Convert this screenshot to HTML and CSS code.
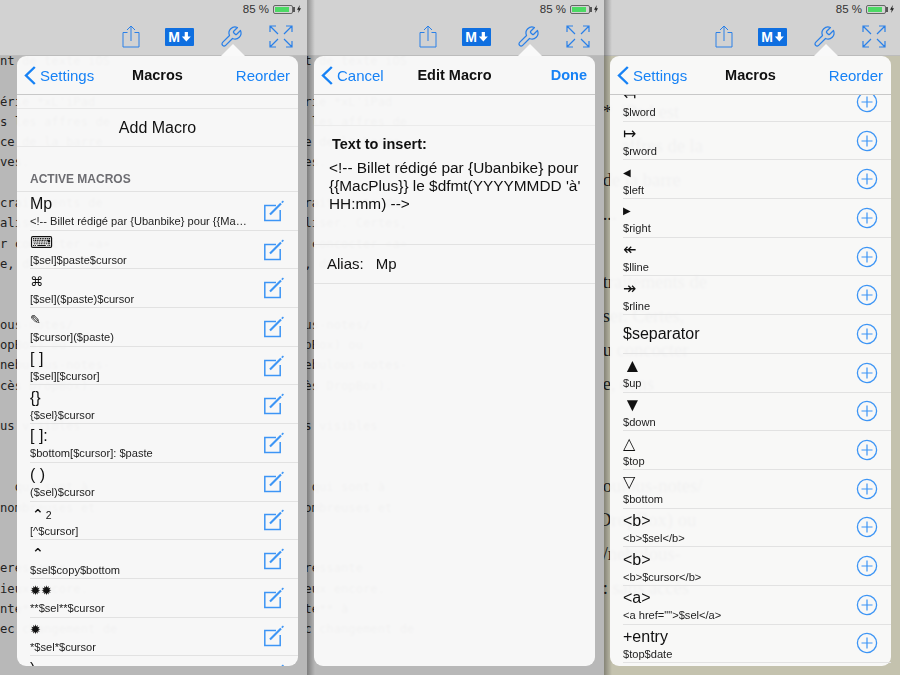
FILE: index.html
```html
<!DOCTYPE html>
<html lang="en">
<head>
    <meta charset="UTF-8">
    <meta name="viewport" content="width=device-width, initial-scale=1.0">
    <title>Macros</title>
    <link rel="stylesheet" href="styles.css">
</head>
<body>
    <svg class="icon-defs" xmlns="http://www.w3.org/2000/svg">
        <symbol id="icon-share" viewBox="0 0 18 23"><path fill="none" stroke="currentColor" d="M5.5 7.5H1v14.5h16V7.5h-4.5M9 16V1M5 5l4-4 4 4"/></symbol>
        <symbol id="icon-wrench" viewBox="0 0 24 24"><path fill="none" stroke="currentColor" stroke-width="1.25" stroke-linejoin="round" d="M14.7 6.3a1 1 0 0 0 0 1.4l1.6 1.6a1 1 0 0 0 1.4 0l3.77-3.77a6 6 0 0 1-7.94 7.94l-6.91 6.91a2.12 2.12 0 0 1-3-3l6.91-6.91a6 6 0 0 1 7.94-7.94l-3.76 3.76z"/></symbol>
        <symbol id="icon-expand" viewBox="0 0 26 25"><path fill="none" stroke="currentColor" stroke-width="1.2" d="M2 2l8 8M2 8V2h6M24 2l-8 8M24 8V2h-6M2 23l8-8M2 17v6h6M24 23l-8-8M24 17v6h-6"/></symbol>
        <symbol id="icon-edit" viewBox="0 0 22 22"><path fill="none" stroke="currentColor" stroke-width="1.5" d="M13 5.5H1.8v15h15.4V10"/><path fill="none" stroke="currentColor" stroke-width="2.2" d="M7 14.5L18 3.5"/><path fill="none" stroke="currentColor" stroke-width="1.6" d="M18.8 2.6l1.6-1.4"/></symbol>
        <symbol id="icon-add" viewBox="0 0 22 22"><circle cx="11" cy="11" r="9.6" fill="none" stroke="currentColor" stroke-width="1.3"/><path fill="none" stroke="currentColor" stroke-width="1.2" d="M11 5.5v11M5.5 11h11"/></symbol>
        <symbol id="icon-chevron" viewBox="0 0 12 19"><path fill="none" stroke="currentColor" stroke-width="2.4" d="M10.8 1L2 9.5l8.8 8.5"/></symbol>
    </svg>

    <div class="screens">
        <!-- list of saved macros -->
        <section class="pane pane-first">
            <header class="toolbar">
                <div class="status"><span>85 %</span><span class="battery"><i></i></span><span class="bolt"></span></div>
                <div class="tools">
                    <svg class="tool tool-share"><use href="#icon-share"/></svg>
                    <span class="md-badge">M<b></b></span>
                    <svg class="tool tool-wrench"><use href="#icon-wrench"/></svg>
                    <svg class="tool tool-expand"><use href="#icon-expand"/></svg>
                </div>
            </header>
            <pre class="backdrop">nt de texte iOS

érie *xL'iPad
s les affres de
ce de la barre
ves.

craitements de
aliser. Certes,
r concocter «a»
e, dans


ous-notes/
opBox) ou
nebulous-notes-
cès DropBox).

us visibles


  qui sont à
nombreuses et


eressante
ieux encore.
nte** à
ec changement de</pre>
            <div class="popover">
                <nav class="navbar">
                    <a class="nav-back"><svg class="chevron"><use href="#icon-chevron"/></svg>Settings</a>
                    <strong class="nav-title">Macros</strong>
                    <a class="nav-action">Reorder</a>
                </nav>
                <div class="content">
                    <div class="add-row">Add Macro</div>
                    <h2 class="section-label">ACTIVE MACROS</h2>
                    <ul class="macro-list">
                        <li class="macro-row"><div><div class="macro-name">Mp</div><div class="macro-text">&lt;!-- Billet rédigé par {Ubanbike} pour {{Ma…</div></div><svg class="row-icon"><use href="#icon-edit"/></svg></li>
                        <li class="macro-row"><div><div class="macro-name">⌨</div><div class="macro-text">[$sel]$paste$cursor</div></div><svg class="row-icon"><use href="#icon-edit"/></svg></li>
                        <li class="macro-row"><div><div class="macro-name glyph-small">⌘</div><div class="macro-text">[$sel]($paste)$cursor</div></div><svg class="row-icon"><use href="#icon-edit"/></svg></li>
                        <li class="macro-row"><div><div class="macro-name glyph-small">✎</div><div class="macro-text">[$cursor]($paste)</div></div><svg class="row-icon"><use href="#icon-edit"/></svg></li>
                        <li class="macro-row"><div><div class="macro-name">[ ]</div><div class="macro-text">[$sel][$cursor]</div></div><svg class="row-icon"><use href="#icon-edit"/></svg></li>
                        <li class="macro-row"><div><div class="macro-name">{}</div><div class="macro-text">{$sel}$cursor</div></div><svg class="row-icon"><use href="#icon-edit"/></svg></li>
                        <li class="macro-row"><div><div class="macro-name">[ ]:</div><div class="macro-text">$bottom[$cursor]: $paste</div></div><svg class="row-icon"><use href="#icon-edit"/></svg></li>
                        <li class="macro-row"><div><div class="macro-name">( )</div><div class="macro-text">($sel)$cursor</div></div><svg class="row-icon"><use href="#icon-edit"/></svg></li>
                        <li class="macro-row"><div><div class="macro-name glyph-caret">⌃<span class="small-two">2</span></div><div class="macro-text">[^$cursor]</div></div><svg class="row-icon"><use href="#icon-edit"/></svg></li>
                        <li class="macro-row"><div><div class="macro-name glyph-caret">⌃</div><div class="macro-text">$sel$copy$bottom</div></div><svg class="row-icon"><use href="#icon-edit"/></svg></li>
                        <li class="macro-row"><div><div class="macro-name glyph-small">✹✹</div><div class="macro-text">**$sel**$cursor</div></div><svg class="row-icon"><use href="#icon-edit"/></svg></li>
                        <li class="macro-row"><div><div class="macro-name glyph-small">✹</div><div class="macro-text">*$sel*$cursor</div></div><svg class="row-icon"><use href="#icon-edit"/></svg></li>
                        <li class="macro-row"><div><div class="macro-name">)</div><div class="macro-text">$sel)</div></div><svg class="row-icon"><use href="#icon-edit"/></svg></li>
                    </ul>
                </div>
            </div>
        </section>

        <!-- one macro being edited -->
        <section class="pane">
            <div class="pane-shadow"></div>
            <header class="toolbar">
                <div class="status"><span>85 %</span><span class="battery"><i></i></span><span class="bolt"></span></div>
                <div class="tools">
                    <svg class="tool tool-share"><use href="#icon-share"/></svg>
                    <span class="md-badge">M<b></b></span>
                    <svg class="tool tool-wrench"><use href="#icon-wrench"/></svg>
                    <svg class="tool tool-expand"><use href="#icon-expand"/></svg>
                </div>
            </header>
            <pre class="backdrop backdrop-shifted">nt de texte iOS

érie *xL'iPad
s les affres de
ce de la barre
ves.

craitements de
aliser. Certes,
r concocter «a»
e, dans


ous-notes/
opBox) ou
nebulous-notes-
cès DropBox).

us visibles


  qui sont à
nombreuses et


eressante
ieux encore.
nte** à
ec changement de</pre>
            <div class="popover">
                <nav class="navbar">
                    <a class="nav-back"><svg class="chevron"><use href="#icon-chevron"/></svg>Cancel</a>
                    <strong class="nav-title">Edit Macro</strong>
                    <a class="nav-action nav-done">Done</a>
                </nav>
                <div class="content edit-form">
                    <div class="insert-block">
                        <div class="insert-label">Text to insert:</div>
                        <p class="insert-text">&lt;!-- Billet rédigé par {Ubanbike} pour {{MacPlus}} le $dfmt(YYYYMMDD 'à' HH:mm) --&gt;</p>
                    </div>
                    <div class="alias-row"><span>Alias:</span><span>Mp</span></div>
                </div>
            </div>
        </section>

        <!-- macros still available -->
        <section class="pane pane-beige">
            <div class="pane-shadow"></div>
            <header class="toolbar">
                <div class="status"><span>85 %</span><span class="battery"><i></i></span><span class="bolt"></span></div>
                <div class="tools">
                    <svg class="tool tool-share"><use href="#icon-share"/></svg>
                    <span class="md-badge">M<b></b></span>
                    <svg class="tool tool-wrench"><use href="#icon-wrench"/></svg>
                    <svg class="tool tool-expand"><use href="#icon-expand"/></svg>
                </div>
            </header>
            <pre class="backdrop backdrop-serif"> *  iPad est
     affres de la
 de la barre
 ...

 traitements de
 ser. Certes,
 u concocter
 e, dans


 oulous-notes/
DropBox) ou
 /nebulous-
 : sans accès</pre>
            <div class="popover">
                <nav class="navbar">
                    <a class="nav-back"><svg class="chevron"><use href="#icon-chevron"/></svg>Settings</a>
                    <strong class="nav-title">Macros</strong>
                    <a class="nav-action">Reorder</a>
                </nav>
                <div class="content">
                    <ul class="macro-list macro-list-scrolled">
                        <li class="macro-row"><div><div class="macro-name">↤</div><div class="macro-text">$lword</div></div><svg class="row-icon"><use href="#icon-add"/></svg></li>
                        <li class="macro-row"><div><div class="macro-name">↦</div><div class="macro-text">$rword</div></div><svg class="row-icon"><use href="#icon-add"/></svg></li>
                        <li class="macro-row"><div><div class="macro-name glyph-tiny">◀</div><div class="macro-text">$left</div></div><svg class="row-icon"><use href="#icon-add"/></svg></li>
                        <li class="macro-row"><div><div class="macro-name glyph-tiny">▶</div><div class="macro-text">$right</div></div><svg class="row-icon"><use href="#icon-add"/></svg></li>
                        <li class="macro-row"><div><div class="macro-name">↞</div><div class="macro-text">$lline</div></div><svg class="row-icon"><use href="#icon-add"/></svg></li>
                        <li class="macro-row"><div><div class="macro-name">↠</div><div class="macro-text">$rline</div></div><svg class="row-icon"><use href="#icon-add"/></svg></li>
                        <li class="macro-row"><div class="macro-name">$separator</div><svg class="row-icon"><use href="#icon-add"/></svg></li>
                        <li class="macro-row"><div><div class="macro-name glyph-large">▲</div><div class="macro-text">$up</div></div><svg class="row-icon"><use href="#icon-add"/></svg></li>
                        <li class="macro-row"><div><div class="macro-name glyph-large">▼</div><div class="macro-text">$down</div></div><svg class="row-icon"><use href="#icon-add"/></svg></li>
                        <li class="macro-row"><div><div class="macro-name">△</div><div class="macro-text">$top</div></div><svg class="row-icon"><use href="#icon-add"/></svg></li>
                        <li class="macro-row"><div><div class="macro-name">▽</div><div class="macro-text">$bottom</div></div><svg class="row-icon"><use href="#icon-add"/></svg></li>
                        <li class="macro-row"><div><div class="macro-name">&lt;b&gt;</div><div class="macro-text">&lt;b&gt;$sel&lt;/b&gt;</div></div><svg class="row-icon"><use href="#icon-add"/></svg></li>
                        <li class="macro-row"><div><div class="macro-name">&lt;b&gt;</div><div class="macro-text">&lt;b&gt;$cursor&lt;/b&gt;</div></div><svg class="row-icon"><use href="#icon-add"/></svg></li>
                        <li class="macro-row"><div><div class="macro-name">&lt;a&gt;</div><div class="macro-text">&lt;a href=""&gt;$sel&lt;/a&gt;</div></div><svg class="row-icon"><use href="#icon-add"/></svg></li>
                        <li class="macro-row"><div><div class="macro-name">+entry</div><div class="macro-text">$top$date</div></div><svg class="row-icon"><use href="#icon-add"/></svg></li>
                    </ul>
                </div>
            </div>
        </section>
    </div>
</body>
</html>
```

FILE: styles.css
```css
* { margin: 0; padding: 0; box-sizing: border-box; }
body {
    font-family: "Liberation Sans", "DejaVu Sans", sans-serif;
    background: #b8b8b8;
    color: #111;
    width: 900px;
    height: 675px;
    overflow: hidden;
}
.icon-defs { display: none; }
.screens { display: flex; height: 675px; }

/* panes */
.pane {
    position: relative;
    width: 297px;
    flex: none;
    overflow: hidden;
    background: #b8b8b8;
}
.pane-first { width: 307px; }
.pane-beige { width: 296px; background: #c4c2ae; }
.pane-shadow {
    position: absolute;
    top: 0;
    bottom: 0;
    left: 0;
    width: 8px;
    z-index: 2;
    background: linear-gradient(90deg, rgba(0, 0, 0, 0.32), rgba(0, 0, 0, 0));
}

/* toolbar */
.toolbar {
    position: relative;
    z-index: 1;
    height: 56px;
    background: #d2d2d2;
    border-bottom: 1px solid #bcbcbc;
}
.status {
    display: flex;
    justify-content: flex-end;
    align-items: center;
    height: 18px;
    padding-right: 6px;
    font-size: 11.5px;
    color: #333;
}
.battery {
    position: relative;
    width: 20px;
    height: 9px;
    margin-left: 4px;
    border: 1px solid #666;
    border-radius: 2px;
    padding: 1px;
}
.battery i { display: block; width: 85%; height: 100%; background: #4cd964; }
.battery::after {
    content: '';
    position: absolute;
    top: 1px;
    right: -3px;
    width: 2px;
    height: 5px;
    background: #555;
}
.bolt {
    width: 4px;
    height: 8px;
    margin-left: 4px;
    background: #222;
    clip-path: polygon(70% 0, 0 58%, 42% 58%, 30% 100%, 100% 40%, 58% 40%);
}
.tools {
    display: flex;
    justify-content: flex-end;
    align-items: center;
    gap: 25px;
    height: 37px;
    padding-right: 13px;
    color: #2a80e8;
}
.tool { display: block; flex: none; }
.tool-share { width: 18px; height: 23px; }
.tool-wrench { width: 24px; height: 24px; }
.tool-expand { width: 26px; height: 25px; }
.md-badge {
    display: flex;
    align-items: center;
    justify-content: center;
    gap: 2px;
    width: 29px;
    height: 18px;
    background: #0f6fe0;
    border-radius: 1px;
    color: #fff;
    font-size: 14px;
    font-weight: bold;
}
.md-badge b {
    width: 9px;
    height: 10px;
    background: #fff;
    clip-path: polygon(32% 0, 68% 0, 68% 50%, 100% 50%, 50% 100%, 0 50%, 32% 50%);
}

/* text behind the popover */
.backdrop {
    margin-top: -5px;
    font-family: "DejaVu Sans Mono", monospace;
    font-size: 12.2px;
    line-height: 20.3px;
    color: #222;
}
.backdrop-shifted { margin-left: -10px; }
.backdrop-serif {
    margin: 39px 0 0 -6px;
    font-family: "Liberation Serif", serif;
    font-size: 18.5px;
    line-height: 34px;
}

/* popover */
.popover {
    position: absolute;
    top: 56px;
    right: 9px;
    bottom: 9px;
    width: 281px;
    z-index: 3;
    display: flex;
    flex-direction: column;
    background: rgba(250, 250, 250, 0.96);
    backdrop-filter: blur(1px);
    border-radius: 9px;
}
.popover::before {
    content: '';
    position: absolute;
    top: -12px;
    right: 53px;
    border-left: 12px solid transparent;
    border-right: 12px solid transparent;
    border-bottom: 12px solid #f9f9f9;
}
.navbar {
    position: relative;
    display: flex;
    justify-content: space-between;
    align-items: center;
    flex: none;
    height: 39px;
    padding: 0 8px 0 7px;
    border-bottom: 1px solid #c8c8c8;
    font-size: 15px;
    color: #1782f5;
}
.nav-back { display: flex; align-items: center; gap: 4px; }
.chevron { width: 12px; height: 19px; }
.nav-title {
    position: absolute;
    left: 0;
    right: 0;
    text-align: center;
    font-size: 14.5px;
    color: #111;
}
.nav-done { font-size: 14.5px; font-weight: bold; }
.content { flex: 1; overflow: hidden; }

/* macros list */
.add-row {
    height: 39px;
    margin-top: 13px;
    border-top: 1px solid #e8e8e8;
    border-bottom: 1px solid #e8e8e8;
    font-size: 16px;
    line-height: 37px;
    text-align: center;
}
.section-label {
    height: 45px;
    padding: 25px 0 0 13px;
    border-bottom: 1px solid #e2e2e2;
    font-size: 12px;
    line-height: 14px;
    font-weight: bold;
    color: #6d6d72;
}
.macro-list { list-style: none; }
.macro-list-scrolled { margin-top: -12px; }
.macro-row {
    display: flex;
    justify-content: space-between;
    align-items: center;
    height: 38.7px;
    margin-left: 13px;
    padding-right: 13px;
    border-bottom: 1px solid #e2e2e2;
}
.macro-name {
    height: 20px;
    font-size: 16px;
    line-height: 20px;
    white-space: nowrap;
}
.glyph-small { font-size: 13px; }
.glyph-tiny { font-size: 10px; }
.glyph-large { font-size: 19px; }
.glyph-caret { font-size: 14px; font-weight: bold; padding-left: 2px; }
.macro-text {
    height: 13px;
    font-size: 11.1px;
    line-height: 14px;
    color: #222;
    white-space: nowrap;
}
.small-two { margin-left: 2px; font-size: 10.5px; font-weight: normal; }
.row-icon { width: 22px; height: 22px; flex: none; color: #3d95f5; }

/* edit form */
.edit-form { padding-top: 30px; }
.insert-block {
    height: 120px;
    padding: 9px 0 0 15px;
    border-top: 1px solid #ebebeb;
    border-bottom: 1px solid #e2e2e2;
}
.insert-label { font-size: 14.5px; line-height: 18px; font-weight: bold; padding-left: 3px; }
.insert-text { margin-top: 6px; width: 264px; font-size: 15.4px; line-height: 18px; }
.alias-row {
    display: flex;
    gap: 12px;
    height: 38.5px;
    padding-left: 13px;
    border-bottom: 1px solid #e2e2e2;
    font-size: 15px;
    line-height: 38px;
}
```
